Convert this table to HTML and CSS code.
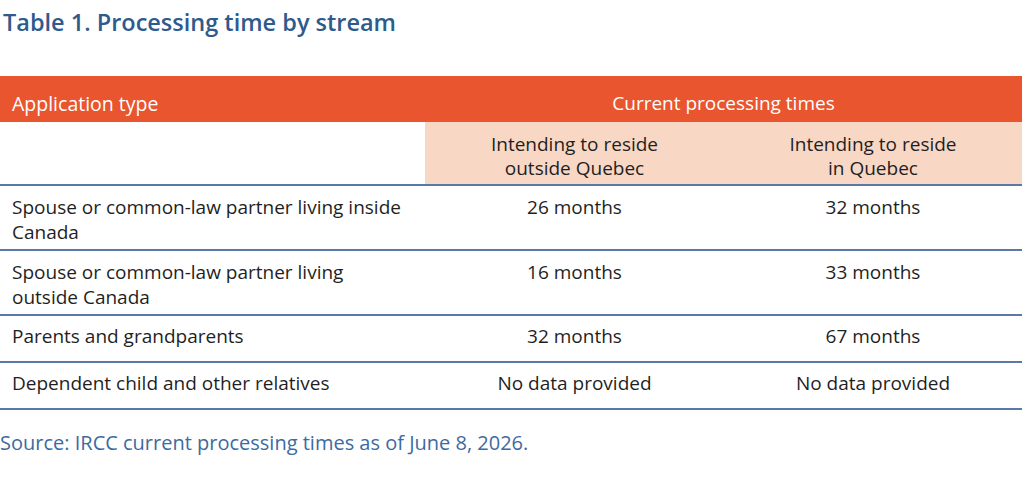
FILE: index.html
```html
<!DOCTYPE html>
<html lang="en">
<head>
<meta charset="utf-8">
<link rel="stylesheet" href="styles.css">
</head>
<body>
<div class="page">
  <h1 class="title">Table 1. Processing time by stream</h1>
  <table class="data">
    <colgroup>
      <col class="c1"><col class="c2"><col class="c3">
    </colgroup>
    <thead>
      <tr class="head">
        <th class="left">Application type</th>
        <th colspan="2">Current processing times</th>
      </tr>
      <tr class="sub">
        <th class="blank"></th>
        <th>Intending to reside<br>outside Quebec</th>
        <th>Intending to reside<br>in Quebec</th>
      </tr>
    </thead>
    <tbody>
      <tr class="tall">
        <td class="left">Spouse or common-law partner living inside Canada</td>
        <td>26 months</td>
        <td>32 months</td>
      </tr>
      <tr class="tall">
        <td class="left">Spouse or common-law partner living outside Canada</td>
        <td>16 months</td>
        <td>33 months</td>
      </tr>
      <tr>
        <td class="left">Parents and grandparents</td>
        <td>32 months</td>
        <td>67 months</td>
      </tr>
      <tr>
        <td class="left">Dependent child and other relatives</td>
        <td>No data provided</td>
        <td>No data provided</td>
      </tr>
    </tbody>
  </table>
  <p class="source">Source: IRCC current processing times as of June 8, 2026.</p>
</div>
</body>
</html>
```
FILE: styles.css
```css
html, body {
  margin: 0;
  padding: 0;
  background: #ffffff;
}
.page {
  width: 1022px;
  font-family: "Open Sans", "Noto Sans", sans-serif;
  color: #1f1f1f;
}
.title {
  margin: 0;
  padding: 7px 0 0 3px;
  height: 76px;
  box-sizing: border-box;
  font-size: 23.5px;
  font-weight: 600;
  color: #2e5a8c;
  line-height: 30px;
}
.data {
  width: 1022px;
  border-collapse: collapse;
  table-layout: fixed;
  font-size: 19px;
}
.c1 { width: 425px; }
.c2 { width: 299px; }
.c3 { width: 298px; }
.data th, .data td {
  padding: 0;
  text-align: center;
  font-weight: 400;
  vertical-align: top;
}
.data .left {
  text-align: left;
  padding-left: 12px;
}
.head th {
  background: #e8552e;
  color: #ffffff;
  height: 46px;
  box-sizing: border-box;
  line-height: 25px;
  padding-top: 15px;
}
.head th.left {
  font-size: 19.5px;
}
.sub th {
  background: #f9d7c5;
  height: 63px;
  box-sizing: border-box;
  padding-top: 10px;
  line-height: 24px;
  border-bottom: 2px solid #5b79a6;
}
.sub th.blank {
  background: #ffffff;
}
.data tbody td {
  border-bottom: 2px solid #5b79a6;
  line-height: 25px;
  height: 47px;
  box-sizing: border-box;
  padding-top: 8px;
}
.data tbody td.left {
  padding-right: 20px;
}
.data tbody tr.tall td {
  height: 65px;
  padding-top: 9px;
}
.source {
  margin: 19px 0 0 0;
  font-size: 20px;
  color: #3d6aa0;
}
```
